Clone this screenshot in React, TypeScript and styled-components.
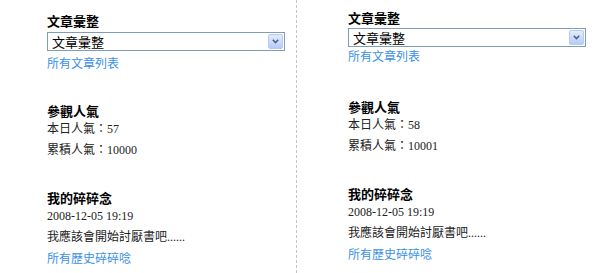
import React from 'react'
import styled, { createGlobalStyle } from 'styled-components'

const GlobalStyle = createGlobalStyle`
    html, body {
        margin: 0;
        padding: 0;
        background: #ffffff;
    }

    body {
        font-family: "Liberation Serif", "Noto Sans CJK TC", serif;
        font-size: 12px;
        color: #222;
    }
`

const Page = styled.div`
    display: flex;
    width: 600px;
    height: 273px;
    overflow: hidden;
`

const Column = styled.div<{ $padLeft: number; $padTop: number; $divider?: boolean }>`
    width: ${p => (p.$divider ? '297px' : 'auto')};
    flex: ${p => (p.$divider ? '0 0 auto' : '1')};
    padding: ${p => p.$padTop}px 0 0 ${p => p.$padLeft}px;
    box-sizing: border-box;
    border-right: ${p => (p.$divider ? '1px dashed #c4c4c4' : 'none')};
`

const Section = styled.div<{ $gap: number }>`
    margin-top: ${p => p.$gap}px;
`

const Heading = styled.div`
    font-family: "Noto Sans CJK TC", sans-serif;
    font-weight: bold;
    font-size: 13px;
    line-height: 17px;
    color: #000;
`

const Row = styled.div`
    line-height: 21px;
    color: #222;
    white-space: nowrap;
`

const LinkRow = styled.a<{ $top?: number }>`
    display: block;
    margin-top: ${p => p.$top ?? 0}px;
    line-height: 21px;
    color: #3a8fe8;
    text-decoration: none;
    white-space: nowrap;
`

const SelectBox = styled.div<{ $height: number; $top: number }>`
    display: flex;
    align-items: center;
    justify-content: space-between;
    width: 238px;
    height: ${p => p.$height}px;
    margin-top: ${p => p.$top}px;
    box-sizing: border-box;
    border: 1px solid #7f9db9;
    background: #fff;
    padding: 0 1px 0 4px;
    font-family: "Noto Sans CJK TC", sans-serif;
    font-size: 13px;
    color: #000;
`

const ArrowButton = styled.span`
    display: flex;
    align-items: center;
    justify-content: center;
    width: 15px;
    height: calc(100% - 2px);
    box-sizing: border-box;
    border: 1px solid #b8cbf3;
    border-radius: 2px;
    background: linear-gradient(#e3ecfd, #b7cbf7);
`

const Chevron = () => (
    <svg width="7" height="5" viewBox="0 0 7 5">
        <path d="M0.8 0.8 L3.5 3.6 L6.2 0.8" fill="none" stroke="#4d6185" strokeWidth="1.6" />
    </svg>
)

interface IPanelProps {
    today: number
    total: number
    side: 'left' | 'right'
}

function Panel({ today, total, side }: IPanelProps) {
    const left = side === 'left'

    return (
        <Column $divider={left} $padLeft={left ? 47 : 51} $padTop={left ? 12 : 9}>
            <Heading>文章彙整</Heading>
            <SelectBox $height={19} $top={left ? 3 : 2}>
                文章彙整
                <ArrowButton>
                    <Chevron />
                </ArrowButton>
            </SelectBox>
            <LinkRow href="#" $top={left ? 3 : 0}>所有文章列表</LinkRow>

            <Section $gap={left ? 27 : 30}>
                <Heading>參觀人氣</Heading>
                <Row>本日人氣：{today}</Row>
                <Row>累積人氣：{total}</Row>
            </Section>

            <Section $gap={28}>
                <Heading>我的碎碎念</Heading>
                <Row>2008-12-05 19:19</Row>
                <Row>我應該會開始討厭書吧......</Row>
                <LinkRow href="#" $top={1}>所有歷史碎碎唸</LinkRow>
            </Section>
        </Column>
    )
}

export default function App() {
    return (
        <>
            <GlobalStyle />
            <Page>
                <Panel side="left" today={57} total={10000} />
                <Panel side="right" today={58} total={10001} />
            </Page>
        </>
    )
}
